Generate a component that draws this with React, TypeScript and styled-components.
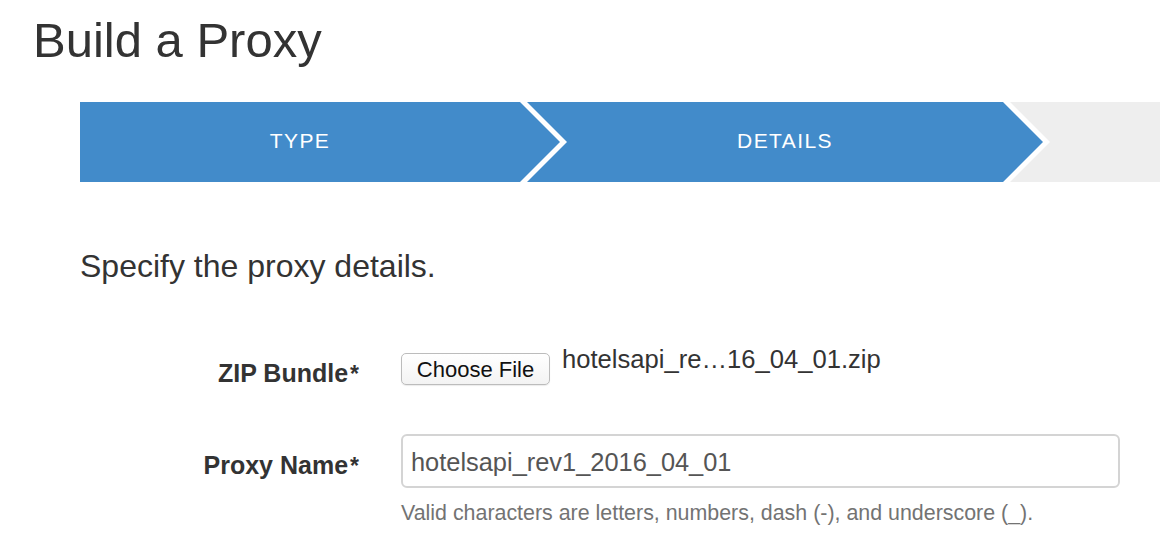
import React from 'react';
import styled, { createGlobalStyle } from 'styled-components';

const GlobalStyle = createGlobalStyle`
  body {
    margin: 0;
    background: #fff;
    font-family: 'Liberation Sans', Arial, Helvetica, sans-serif;
    color: #333;
    overflow-x: hidden;
  }
`;

const Page = styled.div`
  width: 1160px;
  padding-top: 16px;
`;

const Title = styled.h1`
  margin: 0 0 37px 33px;
  font-size: 49px;
  line-height: 1;
  font-weight: 400;
  color: #333;
`;

// 단계 표시줄
const Stepper = styled.div`
  display: flex;
  height: 80px;
  margin-left: 80px;
  overflow: hidden;
`;

const Step = styled.div<{ $first?: boolean; $active?: boolean }>`
  flex-shrink: 0;
  width: ${(props) => (props.$first ? '480px' : '516px')};
  margin-left: ${(props) => (props.$first ? '0' : '-33px')};
  padding: ${(props) => (props.$first ? '0 40px 3px 0' : '0 40px 3px')};
  box-sizing: border-box;
  display: flex;
  align-items: center;
  justify-content: center;
  background: ${(props) => (props.$active ? '#428bca' : '#eeeeee')};
  color: #fff;
  font-size: 21px;
  letter-spacing: 1.4px;
  clip-path: ${(props) =>
    props.$first
      ? 'polygon(0 0, calc(100% - 40px) 0, 100% 50%, calc(100% - 40px) 100%, 0 100%)'
      : 'polygon(0 0, calc(100% - 40px) 0, 100% 50%, calc(100% - 40px) 100%, 0 100%, 40px 50%)'};
`;

const Lead = styled.p`
  margin: 68px 0 0 80px;
  font-size: 32px;
  line-height: 1;
  color: #333;
`;

// 폼
const Form = styled.div`
  margin-top: 71px;
`;

const Row = styled.div<{ $gap?: number }>`
  display: flex;
  align-items: flex-start;
  margin-bottom: ${(props) => props.$gap ?? 0}px;
`;

const Label = styled.label<{ $h: number }>`
  width: 359px;
  flex-shrink: 0;
  box-sizing: border-box;
  padding-top: 4px;
  text-align: right;
  font-size: 25px;
  font-weight: 700;
  line-height: ${(props) => props.$h}px;
  color: #333;
  white-space: nowrap;
`;

const Required = styled.span`
  margin-left: 2px;
  font-size: 23px;
`;

const Control = styled.div`
  margin-left: 42px;
  display: flex;
  flex-direction: column;
`;

const FileLine = styled.div`
  display: flex;
  align-items: flex-start;
`;

const FileButton = styled.button`
  width: 149px;
  height: 32px;
  box-sizing: border-box;
  padding: 2px 0 0;
  border: 1px solid #bcbcbc;
  border-radius: 5px;
  background: linear-gradient(#ffffff, #f3f3f3);
  box-shadow: 0 1px 1px rgba(0, 0, 0, 0.08);
  font-family: 'Liberation Sans', Arial, sans-serif;
  font-size: 22px;
  line-height: 28px;
  color: #111;
  text-align: center;
`;

const FileName = styled.span`
  margin: -6px 0 0 12px;
  font-size: 25.6px;
  line-height: 1;
  color: #333;
  white-space: nowrap;
`;

const TextInput = styled.input`
  width: 719px;
  height: 54px;
  box-sizing: border-box;
  padding: 3px 8px 0;
  border: 2px solid #d4d4d4;
  border-radius: 6px;
  font-family: 'Liberation Sans', Arial, sans-serif;
  font-size: 25.4px;
  color: #555;
  outline: none;
`;

const Help = styled.div`
  margin-top: 13px;
  font-size: 21.4px;
  line-height: 24px;
  color: #737373;
  white-space: nowrap;
`;

const App = () => {
  return (
    <Page>
      <GlobalStyle />
      <Title>Build a Proxy</Title>
      <Stepper>
        <Step $first $active>
          TYPE
        </Step>
        <Step $active>DETAILS</Step>
        <Step />
      </Stepper>
      <Lead>Specify the proxy details.</Lead>
      <Form>
        <Row $gap={44}>
          <Label $h={32}>
            ZIP Bundle<Required>*</Required>
          </Label>
          <Control>
            <FileLine>
              <FileButton type="button">Choose File</FileButton>
              <FileName>hotelsapi_re…16_04_01.zip</FileName>
            </FileLine>
          </Control>
        </Row>
        <Row>
          <Label $h={54}>
            Proxy Name<Required>*</Required>
          </Label>
          <Control>
            <TextInput defaultValue="hotelsapi_rev1_2016_04_01" />
            <Help>Valid characters are letters, numbers, dash (-), and underscore (_).</Help>
          </Control>
        </Row>
      </Form>
    </Page>
  );
};

export default App;
